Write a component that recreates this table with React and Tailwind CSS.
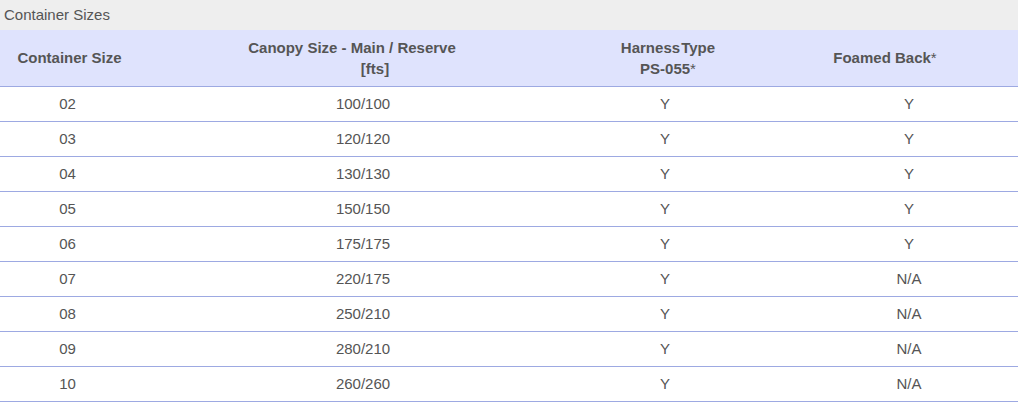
const rows = [
  ["02", "100/100", "Y", "Y"],
  ["03", "120/120", "Y", "Y"],
  ["04", "130/130", "Y", "Y"],
  ["05", "150/150", "Y", "Y"],
  ["06", "175/175", "Y", "Y"],
  ["07", "220/175", "Y", "N/A"],
  ["08", "250/210", "Y", "N/A"],
  ["09", "280/210", "Y", "N/A"],
  ["10", "260/260", "Y", "N/A"],
];

export default function App() {
  return (
    <div className="w-[1018px] bg-white text-[15px] text-[#555555] font-['Liberation_Sans',Arial,sans-serif]">
      {/* titel */}
      <div className="h-[30px] bg-[#eeeeee] pl-[4px] leading-[30px]">Container Sizes</div>

      <table className="w-full border-collapse table-fixed">
        <colgroup>
          <col className="w-[135px]" />
          <col className="w-[456px]" />
          <col className="w-[148px]" />
          <col className="w-[279px]" />
        </colgroup>
        <thead>
          <tr className="h-[56px] bg-[#dfe3fd] border-b border-[#9da9e2] font-bold leading-[21px]">
            <th className="text-center pl-[4px]">Container Size</th>
            <th className="text-center pr-[22px]">
              Canopy Size - Main / Reserve
              <br />
              <span className="inline-block pl-[46px]">[fts]</span>
            </th>
            <th className="text-center pl-[6px] whitespace-nowrap">
              <span className="[word-spacing:-3px]">Harness Type</span>
              <br />
              PS-055<span className="font-normal">*</span>
            </th>
            <th className="text-center pl-[13px]">
              Foamed Back<span className="font-normal">*</span>
            </th>
          </tr>
        </thead>
        <tbody>
          {rows.map((r) => (
            <tr key={r[0]} className="h-[35px] border-b border-[#9da9e2]">
              <td className="text-center pt-[2px]">{r[0]}</td>
              <td className="text-center pt-[2px]">{r[1]}</td>
              <td className="text-center pt-[2px]">{r[2]}</td>
              <td className="text-center pt-[2px] pl-[61px]">{r[3]}</td>
            </tr>
          ))}
        </tbody>
      </table>
    </div>
  );
}
